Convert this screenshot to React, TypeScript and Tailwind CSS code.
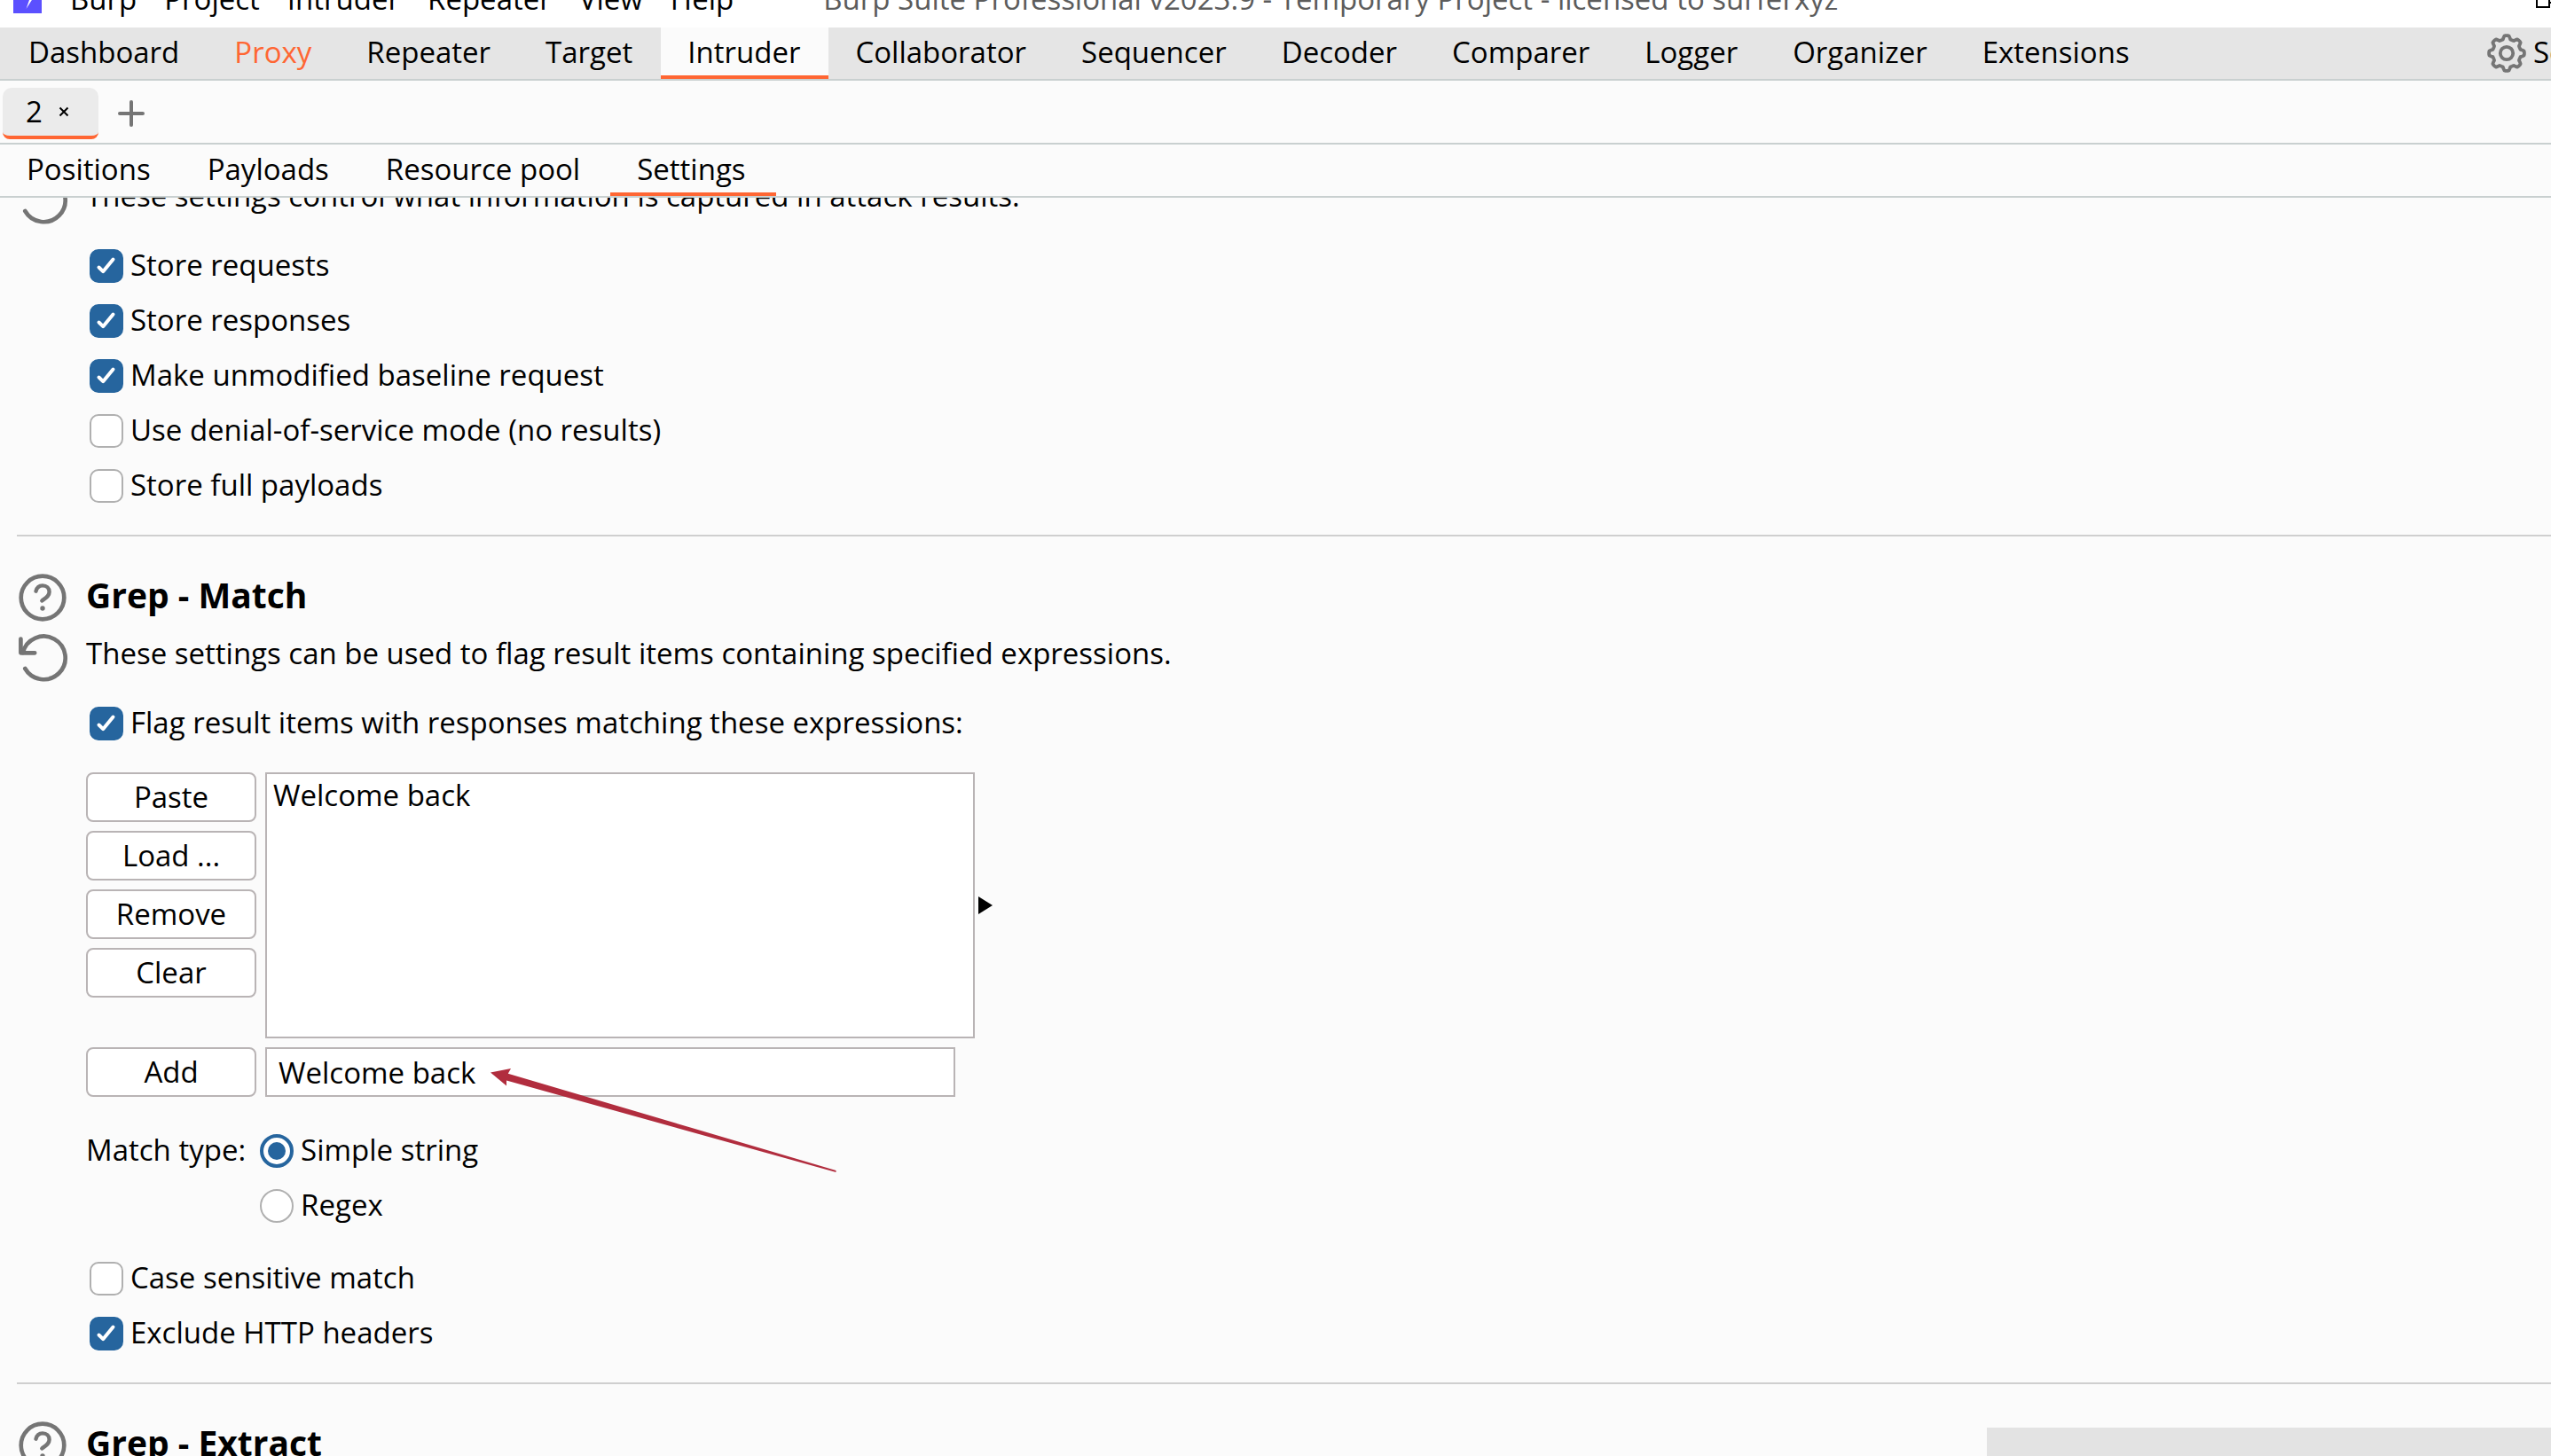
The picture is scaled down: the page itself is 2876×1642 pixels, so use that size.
import type { ReactNode } from "react";

const menus = ["Burp", "Project", "Intruder", "Repeater", "View", "Help"];
const tools = [
  "Dashboard", "Proxy", "Repeater", "Target", "Intruder", "Collaborator", "Sequencer",
  "Decoder", "Comparer", "Logger", "Organizer", "Extensions",
];
const panes = ["Positions", "Payloads", "Resource pool", "Settings"];

function HelpIcon() {
  return (
    <svg viewBox="0 0 54 54" className="block size-[54px]" fill="none" stroke="#757575" strokeLinecap="round" aria-hidden="true">
      <circle cx="27" cy="27" r="24.3" strokeWidth="4.7" />
      <path d="M19.5 19.7c1-4 4-6.3 7.500-6.3 4.500 0 7.600 2.800 7.600 7 0 5-4.500 7.200-8.300 10" strokeWidth="4.4" />
      <circle cx="27" cy="39" r="2.700" fill="#757575" stroke="none" />
    </svg>
  );
}

function ResetIcon() {
  return (
    <svg viewBox="0 0 56 54" className="block h-[54px] w-14" fill="none" stroke="#757575" strokeWidth="4.7" strokeLinecap="round" strokeLinejoin="round" aria-hidden="true">
      <path d="M2.400 5.500v15.800h15.800" />
      <path d="M4.800 21A24.300 24.300 0 1 1 7.300 39" />
    </svg>
  );
}

function GearIcon() {
  const steps = Array.from({ length: 96 }, (_, i) => {
    const a = (i / 96) * Math.PI * 2;
    const wave = Math.max(-1, Math.min(1, Math.cos(a * 8) * 1.8));
    const r = 17.9 + wave * 2;
    return `${(22 + r * Math.sin(a)).toFixed(2)} ${(22 - r * Math.cos(a)).toFixed(2)}`;
  });
  return (
    <svg viewBox="0 0 44 44" className="size-11 shrink-0" fill="none" stroke="#757575" strokeWidth="3.8" strokeLinejoin="round" aria-hidden="true">
      <path d={`M${steps.join("L")}Z`} />
      <circle cx="22" cy="22" r="7.200" />
    </svg>
  );
}

function ToolTab({ label, active, accent }: { label: string; active?: boolean; accent?: boolean }) {
  return (
    <button
      type="button"
      role="tab"
      aria-selected={!!active}
      className={`shrink-0 border-b-4 pt-0.5 pr-8 pl-[30px] ${active ? "border-[#ff6633] bg-[#fbfbfb]" : "border-transparent"} ${accent ? "text-[#ff6633]" : ""}`}
    >
      {label}
    </button>
  );
}

function PaneTab({ label, active }: { label: string; active?: boolean }) {
  return (
    <button
      type="button"
      role="tab"
      aria-selected={!!active}
      className={`shrink-0 border-b-4 pt-0.5 pr-[34px] pl-[30px] ${active ? "border-[#ff6633]" : "border-transparent"}`}
    >
      {label}
    </button>
  );
}

function Check({ label, checked }: { label: string; checked?: boolean }) {
  return (
    <label className="flex h-[62px] w-fit items-center gap-2 pl-1">
      <span className="grid size-[38px]">
        <input
          type="checkbox"
          defaultChecked={checked}
          className="peer col-start-1 row-start-1 size-[38px] appearance-none rounded-[10px] border-2 border-[#b0b0b0] bg-white checked:border-[#26659e] checked:bg-[#26659e]"
        />
        <svg viewBox="0 0 38 38" className="pointer-events-none col-start-1 row-start-1 hidden size-[38px] peer-checked:block" fill="none" stroke="#fff" strokeWidth="4" strokeLinecap="round" strokeLinejoin="round" aria-hidden="true">
          <path d="M10.500 20.500l4.700 4.700 11.300-13.700" />
        </svg>
      </span>
      <span className="pb-0.5">{label}</span>
    </label>
  );
}

function Choice({ label, checked }: { label: string; checked?: boolean }) {
  return (
    <label className="flex h-[62px] w-fit items-center gap-2">
      <span className="grid size-[38px] place-items-center">
        <input
          type="radio"
          name="match-type"
          defaultChecked={checked}
          className="peer col-start-1 row-start-1 size-[38px] appearance-none rounded-full border-2 border-[#b0b0b0] bg-white checked:border-4 checked:border-[#26659e]"
        />
        <span className="pointer-events-none col-start-1 row-start-1 hidden size-5 rounded-full bg-[#26659e] peer-checked:block" />
      </span>
      <span className="pb-0.5">{label}</span>
    </label>
  );
}

function PushButton({ children }: { children: ReactNode }) {
  return (
    <button type="button" className="h-14 w-48 rounded-lg border-2 border-[#b9b4b5] bg-white">
      {children}
    </button>
  );
}

export default function App() {
  return (
    <div className="relative flex h-screen flex-col overflow-hidden bg-[#fbfbfb] font-['Open_Sans','Noto_Sans',sans-serif] text-[33px] leading-[44px] text-black">
      <header className="flex h-[31px] shrink-0 items-end justify-between bg-white">
        <div className="flex h-[54px] items-start gap-8 pl-[15px]">
          <svg viewBox="0 0 32 32" className="mt-1.5 size-8 shrink-0" aria-hidden="true">
            <path d="M0 0h32v32H0z" fill="#5b50ff" />
            <path d="M19 4l-5.500 13h4.500l-3.500 10 8-12.500h-5z" fill="#fff" />
          </svg>
          <nav className="flex gap-[31px]">
            {menus.map((m) => (
              <button key={m} type="button">{m}</button>
            ))}
          </nav>
          <h1 className="ml-[69px] text-[#5c5c5c]">
            Burp Suite Professional v2023.9 - Temporary Project - licensed to surferxyz
          </h1>
        </div>
        <button type="button" aria-label="Restore window" className="mb-[22px] h-5 w-[17px] overflow-hidden">
          <svg viewBox="0 0 17 20" className="h-5 w-[17px]" fill="none" stroke="#000" strokeWidth="2" aria-hidden="true">
            <path d="M1 4h14v15H1zM15 14h6" />
          </svg>
        </button>
      </header>

      <div className="flex h-15 shrink-0 justify-between border-b-2 border-[#c9d0d0] bg-[#e5e5e5]">
        <div role="tablist" className="flex pl-0.5">
          {tools.map((t) => (
            <ToolTab key={t} label={t} active={t === "Intruder"} accent={t === "Proxy"} />
          ))}
        </div>
        <button type="button" className="flex w-[72px] items-center gap-2 overflow-hidden">
          <GearIcon />
          <span className="pb-0.5">Settings</span>
        </button>
      </div>

      <div className="flex h-[72px] shrink-0 items-center border-b-2 border-[#c9d0d0] pt-1 pl-[3px]">
        <div className="flex h-[58px] w-[108px] items-center gap-[18px] rounded-t-[10px] rounded-b-lg border-b-4 border-[#ff6633] bg-[#ebebeb] pl-[26px]">
          <button type="button">2</button>
          <button type="button" aria-label="Close tab 2">
            <svg viewBox="0 0 12 12" className="size-3" stroke="#000" strokeWidth="2" aria-hidden="true">
              <path d="M1.500 1.500l9 9M10.500 1.500l-9 9" />
            </svg>
          </button>
        </div>
        <button type="button" aria-label="New tab" className="ml-[22px]">
          <svg viewBox="0 0 30 30" className="size-[30px]" stroke="#757575" strokeWidth="4" strokeLinecap="round" aria-hidden="true">
            <path d="M15 2v26M2 15h26" />
          </svg>
        </button>
      </div>

      <div role="tablist" className="flex h-15 shrink-0 border-b-2 border-[#c9d0d0]">
        {panes.map((p) => (
          <PaneTab key={p} label={p} active={p === "Settings"} />
        ))}
      </div>

      <main className="min-h-0 flex-1 overflow-hidden">
        <section className="-mt-6 ml-[19px] border-b-2 border-[#cfcfcf] pb-6">
          <div className="flex gap-5 pl-0.5">
            <ResetIcon />
            <p>These settings control what information is captured in attack results.</p>
          </div>
          <div className="mt-4 ml-[78px]">
            <Check label="Store requests" checked />
            <Check label="Store responses" checked />
            <Check label="Make unmodified baseline request" checked />
            <Check label="Use denial-of-service mode (no results)" />
            <Check label="Store full payloads" />
          </div>
        </section>

        <section className="ml-[19px] border-b-2 border-[#cfcfcf] pt-[42px] pb-6">
          <div className="flex gap-5">
            <div className="flex w-[58px] flex-col gap-3.5 pl-0.5">
              <HelpIcon />
              <ResetIcon />
            </div>
            <div className="flex flex-col gap-[22px] pt-0.5">
              <h2 className="text-[39px] leading-[44px] font-bold">Grep - Match</h2>
              <p>These settings can be used to flag result items containing specified expressions.</p>
            </div>
          </div>
          <div className="mt-4 ml-[78px]">
            <Check label="Flag result items with responses matching these expressions:" checked />
            <div className="mt-6 flex gap-2.5">
              <div className="flex flex-col gap-2.5">
                <PushButton>Paste</PushButton>
                <PushButton>Load ...</PushButton>
                <PushButton>Remove</PushButton>
                <PushButton>Clear</PushButton>
              </div>
              <div className="flex items-center gap-1">
                <ul className="h-[300px] w-[800px] border-2 border-[#b9b4b5] bg-white px-[7px] pt-0.5">
                  <li>Welcome back</li>
                </ul>
                <button type="button" aria-label="Expand list">
                  <svg viewBox="0 0 16 20" className="h-5 w-4" aria-hidden="true">
                    <path d="M0 0l16 10L0 20z" />
                  </svg>
                </button>
              </div>
            </div>
            <div className="mt-2.5 flex gap-2.5">
              <PushButton>Add</PushButton>
              <div className="relative">
                <input
                  type="text"
                  aria-label="Expression to add"
                  defaultValue="Welcome back"
                  className="block h-14 w-[778px] border-2 border-[#b9b4b5] bg-white px-[13px]"
                />
                <svg viewBox="0 0 390 118" className="pointer-events-none absolute top-6 left-[254px] h-[118px] w-[390px]" aria-hidden="true">
                  <path d="M0 4.500L23 0l-3.200 5.800L389.500 115v2L18 13.500V19.500z" fill="#b12d3e" />
                </svg>
              </div>
            </div>
            <div className="mt-[30px] flex gap-4">
              <span id="match-type-label" className="pt-2">Match type:</span>
              <div role="radiogroup" aria-labelledby="match-type-label">
                <Choice label="Simple string" checked />
                <Choice label="Regex" />
              </div>
            </div>
            <div className="mt-5">
              <Check label="Case sensitive match" />
              <Check label="Exclude HTTP headers" checked />
            </div>
          </div>
        </section>

        <section className="ml-[19px] flex gap-[22px] pt-[42px] pl-0.5">
          <HelpIcon />
          <h2 className="pt-0.5 text-[39px] leading-[44px] font-bold">Grep - Extract</h2>
        </section>
      </main>

      <div className="absolute right-0 bottom-0 h-8 w-[636px] bg-[#e3e3e3]" />
    </div>
  );
}
